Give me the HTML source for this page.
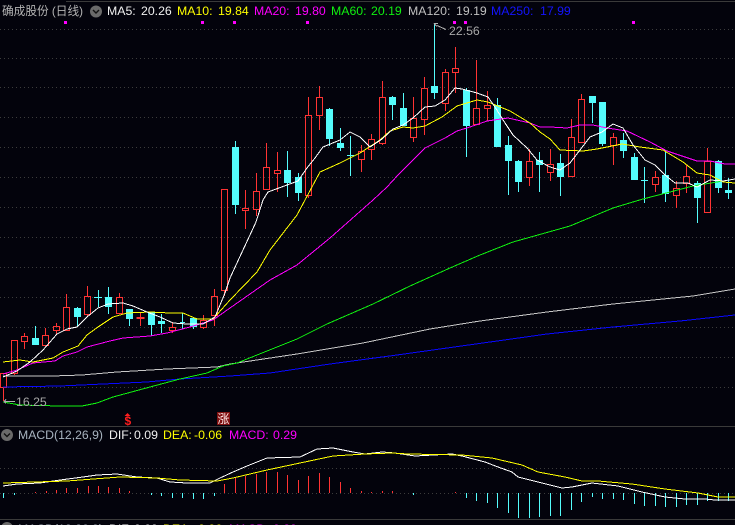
<!DOCTYPE html>
<html><head><meta charset="utf-8"><style>
html,body{margin:0;padding:0;background:#03030c;width:735px;height:525px;overflow:hidden}
svg{display:block;font-family:"Liberation Sans","Noto Sans CJK SC",sans-serif;font-size:12.3px}
.l{fill:none;shape-rendering:crispEdges}
</style></head><body>
<svg width="735" height="525" viewBox="0 0 735 525" xmlns="http://www.w3.org/2000/svg">
<rect width="735" height="525" fill="#03030c"/>
<path d="M66 1.5H735M0 426.5H735M0 519.5H735" stroke="#3a3a3a" class="l"/>
<path d="M0 29.5H735M0 58.5H735M0 87.5H735M0 117.5H735M0 147.5H735M0 177.5H735M0 207.5H735M0 237.5H735M0 267.5H735M0 297.5H735M0 327.5H735M0 357.5H735M0 387.5H735M0 468.5H735M0 493.5H735" stroke="#3c3c3c" stroke-dasharray="1 3" class="l"/>

<!-- magenta markers -->
<path d="M64 21h3v3h-3zM201 21h3v3h-3zM233 21h3v3h-3zM306 21h3v3h-3zM453 21h3v3h-3zM464 21h3v3h-3zM632 21h3v3h-3z" fill="#ff00ff" shape-rendering="crispEdges"/>

<!-- red candles -->
<path class="l" stroke="#ff3333" d="M0.5 373.5h6V387.5h-6zM3.5 387V401
M14.5 373V375M11.5 340.5h6V373.5h-6z
M24.5 333V336M24.5 341V349M21.5 336.5h6V341.5h-6z
M45.5 328V335M42.5 335.5h6V345.5h-6z
M56.5 323V326M56.5 330V335M53.5 326.5h6V330.5h-6z
M66.5 294V307M63.5 307.5h6V330.5h-6z
M87.5 286V296M87.5 314V317M84.5 296.5h6V314.5h-6z
M119.5 293V297M116.5 297.5h6V313.5h-6z
M140.5 312V326M137 317.5h7v1h-7z
M172.5 322V327M172.5 330V333M169.5 327.5h6V330.5h-6z
M203.5 315V320M203.5 327V329M200.5 320.5h6V327.5h-6z
M214.5 289V296M214.5 315V326M211.5 296.5h6V315.5h-6z
M224.5 290V296M221.5 189.5h6V290.5h-6z
M245.5 190V208M245.5 210V229M242.5 208.5h6V210.5h-6z
M256.5 173V191M256.5 209V216M253.5 191.5h6V209.5h-6z
M266.5 143V167M263.5 167.5h6V189.5h-6z
M277.5 152V170M277.5 173V192M274.5 170.5h6V173.5h-6z
M308.5 97V115M308.5 195V198M305.5 115.5h6V195.5h-6z
M319.5 86V97M319.5 115V130M316.5 97.5h6V115.5h-6z
M361.5 145V151M361.5 159V172M358.5 151.5h6V159.5h-6z
M371.5 134V139M371.5 149V160M368.5 139.5h6V149.5h-6z
M382.5 81V97M382.5 143V145M379.5 97.5h6V143.5h-6z
M413.5 97V118M413.5 137V142M410.5 118.5h6V137.5h-6z
M424.5 77V88M424.5 119V135M421.5 88.5h6V119.5h-6z
M445.5 69V72M445.5 103V111M442.5 72.5h6V103.5h-6z
M455.5 47V68M455.5 72V93M452.5 68.5h6V72.5h-6z
M476.5 60V108M476.5 124V125M473.5 108.5h6V124.5h-6z
M487.5 91V105M487.5 108V121M484.5 105.5h6V108.5h-6z
M529.5 149V161M529.5 177V186M526.5 161.5h6V177.5h-6z
M550.5 149V164M550.5 172V181M547.5 164.5h6V172.5h-6z
M571.5 119V137M568.5 137.5h6V176.5h-6z
M581.5 94V99M578.5 99.5h6V142.5h-6z
M613.5 133V137M613.5 145V165M610.5 137.5h6V145.5h-6z
M655.5 171V177M655.5 184V192M652.5 177.5h6V184.5h-6z
M676.5 181V188M676.5 195V208M673.5 188.5h6V195.5h-6z
M686.5 165V176M686.5 183V193M683.5 176.5h6V183.5h-6z
M707.5 148V161M704.5 161.5h6V212.5h-6z"/>

<!-- cyan candle wicks -->
<path class="l" stroke="#54fcfc" d="M35.5 326V345M77.5 307V326M98.5 290V307M94 297.5H102M108.5 287V314M129.5 309V326M151.5 312V336M161.5 314V333M182.5 313V329M180 322.5H185M193.5 318V329M235.5 141V214M287.5 151V197M298.5 173V201M329.5 108V146M340.5 128V151M350.5 136V176M347 155.5H354M392.5 96V120M403.5 93V126M434.5 23V99M466.5 88V157M497.5 98V147M508.5 136V195M518.5 160V192M539.5 152V192M560.5 154V196M592.5 96V123M602.5 102V146M623.5 133V158M634.5 153V180M644.5 167V203M641 180.5H648M665.5 150V202M697.5 181V223M718.5 160V193M728.5 178V199"/>
<!-- cyan candle bodies -->
<path fill="#54fcfc" shape-rendering="crispEdges" d="M32 338h7v7h-7zM74 308h7v9h-7zM158 321h7v3h-7zM105 297h7v10h-7zM126 309h7v10h-7zM148 312h7v13h-7zM190 318h7v9h-7zM232 147h7v58h-7zM284 170h7v13h-7zM295 177h7v16h-7zM326 109h7v30h-7zM337 143h7v5h-7zM389 97h7v8h-7zM400 108h7v18h-7zM431 86h7v7h-7zM463 90h7v36h-7zM494 105h7v42h-7zM505 145h7v16h-7zM515 161h7v21h-7zM536 160h7v5h-7zM557 163h7v14h-7zM589 96h7v7h-7zM599 102h7v42h-7zM620 140h7v11h-7zM631 157h7v23h-7zM662 175h7v19h-7zM694 183h7v15h-7zM715 161h7v27h-7zM725 190h7v3h-7z"/>

<!-- moving averages -->
<polyline class="l" stroke="#0808ff" points="3,387 60,386 103,384 147,382 180,379 230,376 270,373 330,364 397,355 490,342 547,334 613,327 680,321 735,315"/>
<polyline class="l" stroke="#c8c8c8" points="3,376 52,376 82,375 117,372 167,369 217,367 230,364 297,354 363,343 430,329 480,321 547,312 613,304 693,296 735,289"/>
<polyline class="l" stroke="#10f010" points="3,402 20,405 60,406 82,406 97,403 113,397 150,387 180,379 207,373 223,366 237,363 297,339 327,324 350,314 373,304 410,286 450,268 480,255 513,242 570,226 613,208 643,199 693,186 735,179"/>
<polyline class="l" stroke="#ff00ff" points="3,374 17,370 33,363 55,361 63,356 77,352 87,347 110,341 123,338 150,336 167,333 190,327 213,320 230,308 270,280 297,265 330,238 373,200 387,187 398,175 425,148 445,138 457,131 470,127 487,121 508,118 530,123 540,127 550,127 567,128 580,125 593,125 607,128 627,131 650,142 667,151 697,161 710,161 725,164 735,164"/>
<polyline class="l" stroke="#ffff00" points="3,362 20,360 33,362 53,358 63,352 78,346 87,335 98,327 113,317 127,313 150,312 170,313 183,313 197,319 213,319 230,300 257,272 270,250 297,215 320,172 340,163 360,153 380,140 390,131 403,127 413,128 425,126 442,117 457,106 477,100 488,102 510,111 530,123 540,132 550,139 560,150 583,151 597,149 622,144 640,147 663,150 683,162 697,173 710,175 723,182 735,183"/>
<polyline class="l" stroke="#ffffff" points="3,377 17,371 30,362 43,350 57,334 67,329 77,327 87,317 98,308 108,304 123,303 133,306 147,312 160,317 173,323 187,324 203,324 215,317 225,293 230,278 243,250 256,222 263,200 268,192 287,185 298,181 307,168 315,158 323,147 340,140 350,132 360,137 370,147 382,139 393,129 403,125 413,118 425,107 435,106 445,100 455,88 462,89 477,93 488,97 495,107 505,123 513,135 527,148 537,160 550,167 560,170 570,163 580,150 590,137 602,132 613,124 623,128 633,145 645,160 655,165 665,175 675,183 688,183 697,187 710,180 723,181 735,179"/>

<!-- high / low labels -->
<path class="l" stroke="#b0b0b0" d="M434 23.5h4M434 23.5l3 3M437 25.5l9 4"/>
<text x="449" y="35" fill="#a8a8a8">22.56</text>
<path class="l" stroke="#b0b0b0" d="M4 401.5H15M4 401.5l2 -2M4 401.5l2 2"/>
<text x="16" y="406" fill="#a8a8a8">16.25</text>

<!-- signals -->
<path d="M127.5 413l3 3h-6z" fill="#ff1e1e"/>
<text x="124.5" y="425" fill="#ff1e1e" font-weight="bold" font-size="12">$</text>
<rect x="217" y="412" width="13" height="13" fill="#7e0f0f"/>
<text x="217.5" y="423" fill="#ffe8e8" font-size="12">涨</text>

<!-- header -->
<text x="2" y="15" fill="#b4b4b4" font-size="12" textLength="81" lengthAdjust="spacingAndGlyphs">确成股份 (日线)</text>
<circle cx="96" cy="11.5" r="6" fill="#6a6a6a"/><path d="M93 10l3 3 3-3" stroke="#111" stroke-width="1.4" fill="none"/>
<text x="107" y="15" fill="#f0f0f0">MA5:</text><text x="141" y="15" fill="#f0f0f0">20.26</text>
<text x="177" y="15" fill="#ffff00">MA10:</text><text x="218" y="15" fill="#ffff00">19.84</text>
<text x="254" y="15" fill="#ff00ff">MA20:</text><text x="295" y="15" fill="#ff00ff">19.80</text>
<text x="331" y="15" fill="#10f010">MA60:</text><text x="371" y="15" fill="#10f010">20.19</text>
<text x="408" y="15" fill="#c0c0c0">MA120:</text><text x="456" y="15" fill="#c0c0c0">19.19</text>
<text x="491" y="15" fill="#1414ff">MA250:</text><text x="540" y="15" fill="#1414ff">17.99</text>

<!-- MACD header -->
<circle cx="7" cy="435" r="6" fill="#6a6a6a"/><path d="M4 433.5l3 3 3-3" stroke="#111" stroke-width="1.4" fill="none"/>
<text x="18" y="439" fill="#a8b4c0" textLength="85" lengthAdjust="spacingAndGlyphs">MACD(12,26,9)</text>
<text x="109" y="439" fill="#f0f0f0">DIF:</text><text x="134" y="439" fill="#f0f0f0">0.09</text>
<text x="163" y="439" fill="#ffff00">DEA:</text><text x="194" y="439" fill="#ffff00">-0.06</text>
<text x="229" y="439" fill="#ff00ff">MACD:</text><text x="273" y="439" fill="#ff00ff">0.29</text>

<!-- MACD histogram -->
<path class="l" stroke="#ff3333" d="M35.5 492V493M46.5 491V493M56.5 490V493M66.5 488V493M77.5 488V493M88.5 486V493M98.5 486V493M108.5 487V493M119.5 488V493M129.5 491V493M224.5 484V493M235.5 478V493M245.5 476V493M256.5 474V493M266.5 472V493M277.5 472V493M287.5 475V493M298.5 480V493M308.5 476V493M319.5 473V493M329.5 477V493M340.5 482V493M350.5 488V493M361.5 491V493M371.5 492V493M382.5 491V493M392.5 491V493M455.5 492V493"/>
<path class="l" stroke="#54fcfc" d="M3.5 493V498M14.5 493V495M151.5 493V495M161.5 493V496M172.5 493V498M182.5 493V498M193.5 493V499M203.5 493V499M214.5 493V496M413.5 493V495M466.5 493V498M476.5 493V501M487.5 493V503M497.5 493V508M508.5 493V513M518.5 493V518M529.5 493V518M539.5 493V517M550.5 493V516M560.5 493V516M571.5 493V510M581.5 493V502M592.5 493V497M602.5 493V499M613.5 493V499M623.5 493V500M634.5 493V504M644.5 493V506M655.5 493V506M665.5 493V507M676.5 493V507M686.5 493V505M697.5 493V505M707.5 493V501M718.5 493V501M728.5 493V501"/>
<!-- MACD lines -->
<polyline class="l" stroke="#ffffff" points="3,486 17,484 40,483 60,480 83,477 97,475 117,474 137,477 157,478 170,482 187,483 210,483 220,478 233,472 247,466 267,458 300,457 317,449 333,448 353,452 365,454 382,452 395,453 415,456 452,454 462,456 485,462 498,467 512,472 518,477 538,482 562,488 572,487 592,483 618,486 642,492 665,497 685,499 705,499 715,500 735,500"/>
<polyline class="l" stroke="#ffff00" points="3,483 67,481 120,477 157,478 180,480 217,481 233,478 267,470 300,463 333,456 365,454 392,453 408,454 462,455 492,458 522,465 538,472 565,477 582,481 598,481 632,484 665,489 698,493 718,497 735,497"/>

<!-- clipped second panel header -->
<circle cx="7" cy="528" r="6" fill="#6a6a6a"/>
<text x="18" y="533" fill="#a8b4c0" textLength="85" lengthAdjust="spacingAndGlyphs">MACD(12,26,9)</text>
<text x="109" y="533" fill="#f0f0f0">DIF:</text><text x="134" y="533" fill="#f0f0f0">0.09</text>
<text x="163" y="533" fill="#ffff00">DEA:</text><text x="194" y="533" fill="#ffff00">-0.06</text>
<text x="229" y="533" fill="#ff00ff">MACD:</text><text x="273" y="533" fill="#ff00ff">0.29</text>
</svg>
</body></html>
